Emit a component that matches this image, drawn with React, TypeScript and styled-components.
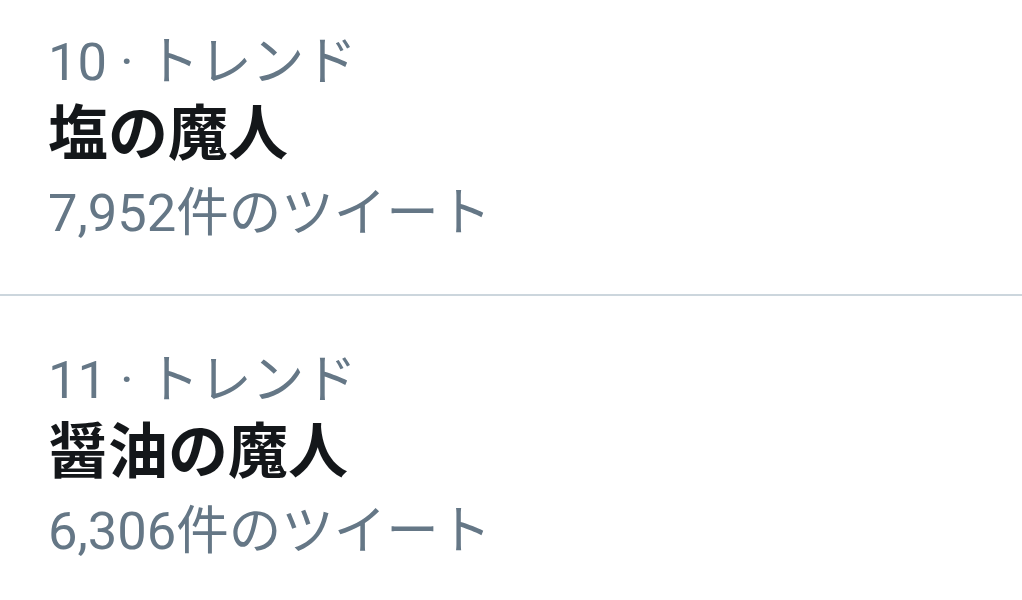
import styled, { createGlobalStyle } from 'styled-components';

const GlobalStyle = createGlobalStyle`
  html, body {
    margin: 0;
    padding: 0;
    background: #ffffff;
    overflow: hidden;
  }
  body {
    font-family: Roboto, "Noto Sans CJK JP", sans-serif;
  }
`;

const Viewport = styled.div`
  width: 1022px;
  height: 600px;
  overflow: hidden;
`;

const TrendList = styled.ul`
  list-style: none;
  margin: -22px 0 0;
  padding: 0;
`;

const Trend = styled.li`
  padding: 48px 48px 45px;
  border-bottom: 2px solid #ccd6dd;
`;

const Meta = styled.div`
  font-size: 52.5px;
  line-height: 72px;
  color: #657786;
  white-space: nowrap;
`;

const Title = styled.div`
  font-size: 60px;
  line-height: 73px;
  margin-bottom: 6px;
  font-weight: 700;
  color: #14171a;
  white-space: nowrap;
`;

interface trendInterface {
  rank: number;
  name: string;
  tweets: string;
}

const trends: trendInterface[] = [
  { rank: 10, name: '塩の魔人', tweets: '7,952' },
  { rank: 11, name: '醤油の魔人', tweets: '6,306' },
];

function App() {
  return (
    <Viewport>
      <GlobalStyle />
      <TrendList>
        {trends.map((trend) => (
          <Trend key={trend.rank}>
            <Meta>{trend.rank} · トレンド</Meta>
            <Title>{trend.name}</Title>
            <Meta>{trend.tweets}件のツイート</Meta>
          </Trend>
        ))}
      </TrendList>
    </Viewport>
  );
}

export default App;
